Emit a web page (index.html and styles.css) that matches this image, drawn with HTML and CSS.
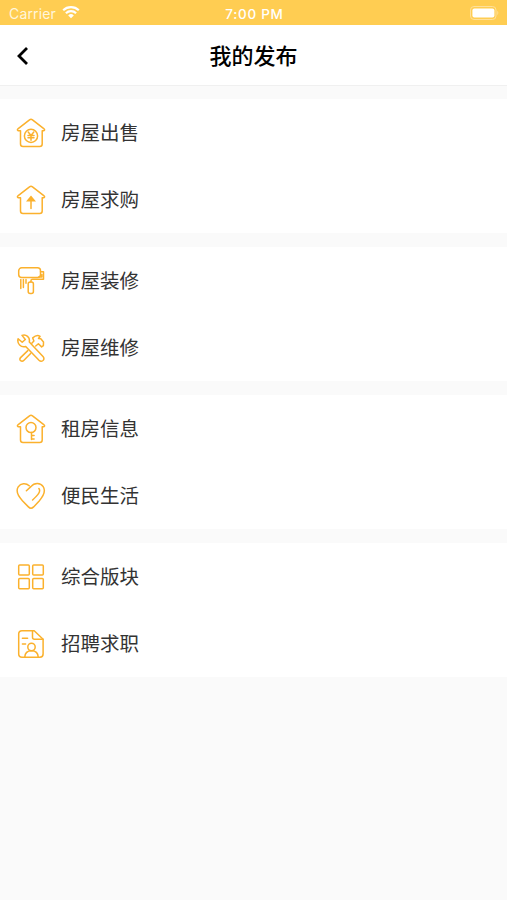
FILE: index.html
```html
<!DOCTYPE html>
<html lang="zh-CN">
<head>
  <meta charset="UTF-8" />
  <meta name="viewport" content="width=device-width, initial-scale=1.0" />
  <title>我的发布</title>
  <link rel="stylesheet" href="styles.css">
</head>
<body>
  <div class="status-bar">
    <div class="carrier">
      <span>Carrier</span>
      <svg class="wifi" viewBox="0 0 18 14">
        <path d="M1.2 5.2a11.2 11.2 0 0 1 15.6 0M3.9 8.2a7.3 7.3 0 0 1 10.2 0" />
        <path class="solid" d="M9 13.2L6.2 10.4a4 4 0 0 1 5.6 0z" />
      </svg>
    </div>
    <div class="time">7:00 PM</div>
    <div class="power">
      <svg class="battery" viewBox="0 0 30 14">
        <rect class="shell" x="0.5" y="0.5" width="25.5" height="13" rx="3.5" />
        <rect class="level" x="2.4" y="2.4" width="22" height="9.2" rx="2" />
        <path class="tip" d="M27.3 4.8q2 2.2 0 4.4z" />
      </svg>
    </div>
  </div>

  <header class="header">
    <button class="back" aria-label="返回">
      <svg viewBox="0 0 14 20"><path d="M11 2L3 10l8 8" /></svg>
    </button>
    <h1>我的发布</h1>
  </header>

  <main class="menu">
    <section class="group">
      <a class="item">
        <svg class="icon" viewBox="0 0 30 30">
          <path d="M4.5 12.7H2.2q-1.5-.5-.3-1.8L13.5 1.8q1.5-1.1 3 0L28.1 10.9q1.2 1.3-.3 1.8H26.2V26q0 2.5-2.5 2.5H7Q4.5 28.5 4.5 26z" />
          <circle cx="15" cy="17.9" r="6.6" />
          <path d="M12.2 14l2.8 3.4 2.8-3.4M15 17.4v4.9M12 17.4h6M12 19.8h6" />
        </svg>
        <span>房屋出售</span>
      </a>
      <a class="item">
        <svg class="icon" viewBox="0 0 30 30">
          <path d="M4.5 12.7H2.2q-1.5-.5-.3-1.8L13.5 1.8q1.5-1.1 3 0L28.1 10.9q1.2 1.3-.3 1.8H26.2V26q0 2.5-2.5 2.5H7Q4.5 28.5 4.5 26z" />
          <path d="M15 14v9.4" />
          <path class="fill" d="M15 10.6l5 6H10z" />
        </svg>
        <span>房屋求购</span>
      </a>
    </section>

    <section class="group">
      <a class="item">
        <svg class="icon" viewBox="0 0 30 30">
          <rect x="2.7" y="1.8" width="21.8" height="9.8" rx="3" />
          <path d="M24.5 5.8h3v7.4H16.6q-1.700 0-1.700 1.700v1.100M25.800 8.500v2.600h-3" />
          <rect x="12.2" y="16" width="5.2" height="11.6" rx="2" />
          <path d="M4.800 13.600v9M7.400 13.600v7.800M10 13.600v3.600" />
        </svg>
        <span>房屋装修</span>
      </a>
      <a class="item">
        <svg class="icon" viewBox="0 0 30 30">
          <path d="M2.1 5.7l4.1 3.6 3.1-2.8L6 2.4c4.2-1.4 8.2 1.8 7.3 6.5L27 23.5q1.8 2.3 0 4-2 1.7-4-.2L9.7 13.5C5 15 .7 10.7 2.1 5.7z" />
          <path d="M15.8 10.3l2.1-2.2-1.2-3.2q4-3.6 7.4-1.6l-1.6 2.2 2.3.3 2.7 3.2-.1 3.6-1.8 1.3-3.2-3.2-2.7 2.3M11.8 17.6l-7 6.8q-1.8 1.8-.2 3.3 1.7 1.2 3.4-.5l6.6-6.8" />
        </svg>
        <span>房屋维修</span>
      </a>
    </section>

    <section class="group">
      <a class="item">
        <svg class="icon" viewBox="0 0 30 30">
          <path d="M4.5 12.7H2.2q-1.5-.5-.3-1.8L13.5 1.8q1.5-1.1 3 0L28.1 10.9q1.2 1.3-.3 1.8H26.2V26q0 2.5-2.5 2.5H7Q4.5 28.5 4.5 26z" />
          <circle cx="15" cy="13.6" r="5" />
          <path d="M15.5 18.6v6.8M15.5 21.4h2.6M15.5 25h2.6" />
        </svg>
        <span>租房信息</span>
      </a>
      <a class="item">
        <svg class="icon" viewBox="0 0 30 30">
          <path d="M10.4 9.8l4.5-4.2C18.5 1.2 24.5 1.5 27.2 5.7c3.2 5-.1 9.8-4 14.2l-5.6 6q-2.6 2.6-5.2 0l-6-6.2C2.5 15.5-.7 10.6 2.2 5.9 4.7 2 10 1.6 13.2 4.8M22.9 7.5c2.3 3-.8 6.4-6.3 11.5" />
        </svg>
        <span>便民生活</span>
      </a>
    </section>

    <section class="group">
      <a class="item">
        <svg class="icon" viewBox="0 0 30 30">
          <rect x="2.7" y="2.9" width="10.6" height="10.2" rx="1" />
          <rect x="16.7" y="2.9" width="10.6" height="10.2" rx="1" />
          <rect x="2.7" y="16.5" width="10.6" height="10.2" rx="1" />
          <rect x="16.7" y="16.5" width="10.6" height="10.2" rx="1" />
        </svg>
        <span>综合版块</span>
      </a>
      <a class="item">
        <svg class="icon" viewBox="0 0 30 30">
          <path d="M6 1.8h12.2l8.9 8.4V25q0 3.2-3.2 3.2H6Q2.7 28.2 2.7 25V5Q2.7 1.8 6 1.8z" />
          <path d="M16.5 1.8v6.4q0 2 2 2h8.6M6.4 9.3h5.2M6.4 15h3.2" />
          <circle cx="15.5" cy="18" r="3.7" />
          <path d="M8.8 28c.2-4.4 3-6.3 6.7-6.3s6.5 1.9 6.7 6.3" />
        </svg>
        <span>招聘求职</span>
      </a>
    </section>
  </main>
</body>
</html>
```
FILE: styles.css
```css
* {
  box-sizing: border-box;
}
body {
  margin: 0;
  min-height: 100vh;
  background-color: #fafafa;
  font-family: "Noto Sans CJK SC", sans-serif;
  color: #333;
}
.status-bar {
  display: grid;
  grid-template-columns: 1fr auto 1fr;
  align-items: center;
  height: 25px;
  padding: 2px 7px 0 9px;
  background-color: #ffcd52;
  color: #fff;
  font-family: Inter, sans-serif;
  font-size: 14px;
}
.carrier {
  display: flex;
  align-items: center;
  gap: 6px;
  letter-spacing: 0.15px;
  color: #fff6dc;
}
.time {
  font-size: 13.5px;
  font-weight: 500;
  letter-spacing: 0.7px;
}
.power {
  display: flex;
  justify-content: flex-end;
}
.wifi {
  width: 18px;
  height: 14px;
  margin-top: -3px;
  fill: none;
  stroke: #fff;
  stroke-width: 2.2;
}
.wifi .solid {
  fill: #fff;
  stroke: none;
}
.battery {
  width: 30px;
  height: 14px;
  margin-top: -1px;
}
.shell {
  fill: none;
  stroke: #ffe09a;
}
.level {
  fill: #fff;
}
.tip {
  fill: #ffe09a;
}
.header {
  display: grid;
  grid-template-columns: 46px 1fr 46px;
  align-items: center;
  height: 61px;
  background-color: #fff;
  border-bottom: 1px solid #f0f0f0;
}
.header h1 {
  margin: 0;
  padding-bottom: 3px;
  font-size: 22px;
  font-weight: 500;
  line-height: 30px;
  text-align: center;
  color: #000;
}
.back {
  display: flex;
  padding: 1px 0 0 16px;
  border: none;
  background: none;
}
.back svg {
  width: 14px;
  height: 20px;
  fill: none;
  stroke: #000;
  stroke-width: 2.8;
}
.menu {
  display: flex;
  flex-direction: column;
  gap: 14px;
  padding-top: 13px;
}
.group {
  background-color: #fff;
}
.item {
  display: flex;
  align-items: center;
  gap: 15px;
  height: 67px;
  padding-left: 16px;
  font-size: 19.5px;
  line-height: 28px;
}
.item span {
  padding-bottom: 2px;
}
.icon {
  width: 30px;
  height: 30px;
  fill: none;
  stroke: #fbb12d;
  stroke-width: 1.5;
  stroke-linecap: round;
  stroke-linejoin: round;
}
.icon .fill {
  fill: #fbb12d;
  stroke: none;
}
```
